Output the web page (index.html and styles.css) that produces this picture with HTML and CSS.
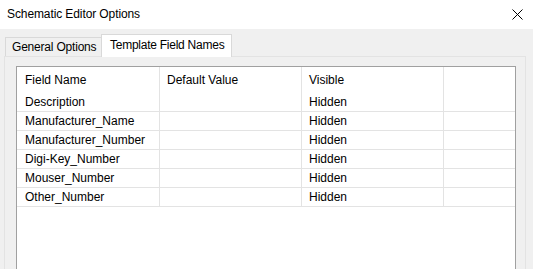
FILE: index.html
```html
<!DOCTYPE html>
<html>
<head>
<meta charset="utf-8">
<link rel="stylesheet" href="styles.css">
</head>
<body>
<div class="window">
  <div class="titlebar">
    <span class="title">Schematic Editor Options</span>
    <svg class="close" width="11" height="11" viewBox="0 0 11 11"><path d="M0.5 0.5L10.5 10.5M10.5 0.5L0.5 10.5" stroke="#000" stroke-width="1" fill="none"/></svg>
  </div>
  <div class="body">
    <div class="tabs">
      <div class="tab">General Options</div>
      <div class="tab active">Template Field Names</div>
    </div>
    <div class="panel">
      <div class="grid">
        <div class="cell head">Field Name</div>
        <div class="cell head">Default Value</div>
        <div class="cell head">Visible</div>
        <div class="cell head last"></div>

        <div class="cell">Description</div><div class="cell"></div><div class="cell">Hidden</div><div class="cell last"></div>
        <div class="cell">Manufacturer_Name</div><div class="cell"></div><div class="cell">Hidden</div><div class="cell last"></div>
        <div class="cell">Manufacturer_Number</div><div class="cell"></div><div class="cell">Hidden</div><div class="cell last"></div>
        <div class="cell">Digi-Key_Number</div><div class="cell"></div><div class="cell">Hidden</div><div class="cell last"></div>
        <div class="cell">Mouser_Number</div><div class="cell"></div><div class="cell">Hidden</div><div class="cell last"></div>
        <div class="cell">Other_Number</div><div class="cell"></div><div class="cell">Hidden</div><div class="cell last"></div>
      </div>
    </div>
  </div>
</div>
</body>
</html>
```
FILE: styles.css
```css
html, body {
  margin: 0;
  padding: 0;
  height: 100%;
  overflow: hidden;
}
body {
  background: #f0f0f0;
  font-family: "Liberation Sans", Arial, sans-serif;
  font-size: 12px;
  color: #000;
}
.titlebar {
  height: 29px;
  background: #fff;
  display: flex;
  align-items: center;
  justify-content: space-between;
  padding: 0 10px 0 7px;
  box-sizing: border-box;
}
.title {
  font-size: 12px;
  letter-spacing: -0.1px;
  margin-top: -1px;
}
.close {
  display: block;
  margin-top: -1px;
}
.body {
  padding: 5px 7px 0 4px;
}
.tabs {
  display: flex;
  align-items: flex-end;
  padding-left: 1px;
  height: 22px;
  position: relative;
  z-index: 1;
}
.tab {
  box-sizing: border-box;
  height: 19px;
  width: 96px;
  border: 1px solid #d9d9d9;
  border-bottom: none;
  border-right: none;
  background: #f0f0f0;
  line-height: 19px;
  padding-left: 6px;
  letter-spacing: -0.2px;
  white-space: nowrap;
}
.tab.active {
  height: 23px;
  width: 131px;
  background: #fff;
  border-right: 1px solid #d9d9d9;
  margin-bottom: -1px;
  line-height: 21px;
  padding-left: 8px;
  letter-spacing: -0.25px;
}
.panel {
  border: 1px solid #e3e3e3;
  background: #f0f0f0;
  padding: 9px 9px 0 11px;
  height: 300px;
}
.grid {
  display: grid;
  grid-template-columns: 143px 142px 142px 71px;
  grid-template-rows: 26px;
  grid-auto-rows: 19px;
  align-content: start;
  border: 1px solid #a0a0a0;
  background: #fff;
  height: 300px;
}
.cell {
  box-sizing: border-box;
  border-right: 1px solid #e3e3e3;
  border-bottom: 1px solid #e3e3e3;
  padding-left: 8px;
  line-height: 18px;
  white-space: nowrap;
}
.cell:nth-child(4n+2), .cell:nth-child(4n+3) {
  padding-left: 7px;
}
.cell.last {
  border-right: none;
}
.cell.head {
  border-bottom: none;
  line-height: 26px;
}
```
